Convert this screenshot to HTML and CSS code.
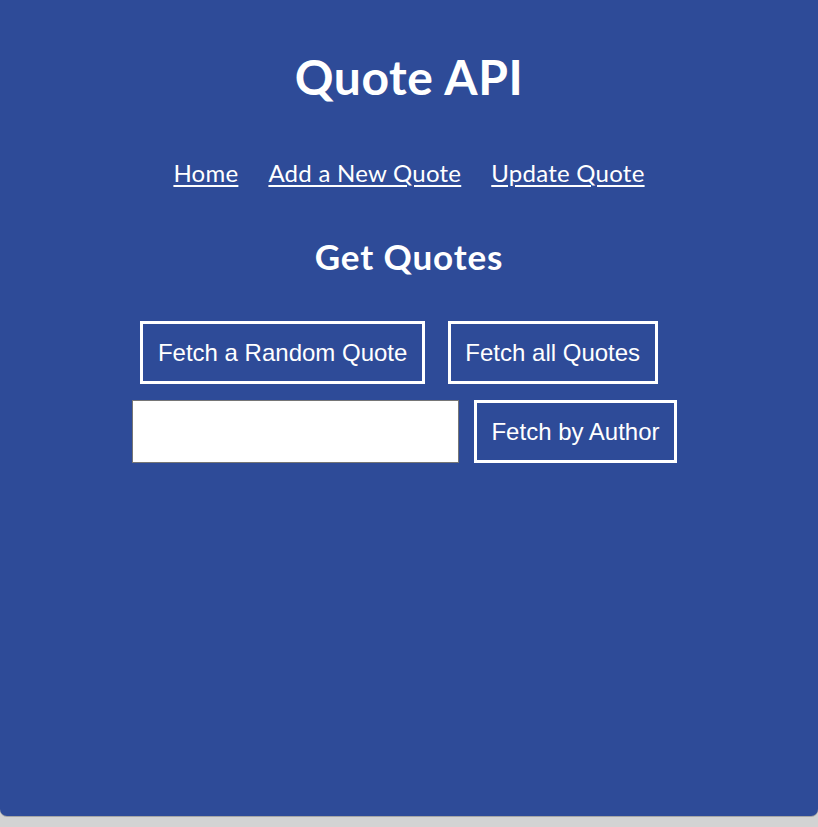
FILE: index.html
```html
<!DOCTYPE html>
<html lang="en">
<head>
<meta charset="utf-8">
<title>Quote API</title>
<link rel="stylesheet" href="styles.css">
</head>
<body>
<div class="page">
  <h1 class="title">Quote API</h1>
  <nav class="nav">
    <a href="#">Home</a>
    <a href="#">Add a New Quote</a>
    <a href="#">Update Quote</a>
  </nav>
  <h2 class="subtitle">Get Quotes</h2>
  <div class="row row-one">
    <button class="btn">Fetch a Random Quote</button>
    <button class="btn">Fetch all Quotes</button>
  </div>
  <div class="row row-two">
    <input class="author" type="text">
    <button class="btn">Fetch by Author</button>
  </div>
</div>
</body>
</html>
```
FILE: styles.css
```css
html, body {
  margin: 0;
  padding: 0;
}
body {
  background: #d3d3d3;
  height: 827px;
  overflow: hidden;
}
.page {
  height: 816px;
  box-sizing: border-box;
  background: #2e4b98;
  border-radius: 0 0 7px 7px;
  box-shadow: 0 1px 0 #a6a6a6;
  color: #fff;
  font-family: "Lato", "Noto Sans", sans-serif;
  padding-top: 48px;
  display: flex;
  flex-direction: column;
  align-items: center;
}
.title {
  margin: 0;
  font-size: 48px;
  line-height: 58px;
  font-weight: 700;
  letter-spacing: 0.6px;
}
.nav {
  margin-top: 52px;
  display: flex;
  gap: 30px;
  font-size: 24px;
  line-height: 30px;
  letter-spacing: 0.25px;
}
.nav a {
  color: #fff;
  text-decoration: underline;
  text-underline-offset: 3px;
  text-decoration-thickness: 2px;
}
.subtitle {
  margin: 48px 0 0;
  font-size: 35px;
  line-height: 40px;
  font-weight: 700;
  letter-spacing: 0.9px;
}
.row {
  display: flex;
  justify-content: center;
}
.row-one {
  margin-top: 45px;
  gap: 23px;
  padding-right: 20px;
}
.row-two {
  margin-top: 16px;
  gap: 15px;
  padding-right: 9px;
}
.btn {
  font-family: "Liberation Sans", Arial, sans-serif;
  font-size: 24px;
  line-height: 27px;
  color: #fff;
  background: transparent;
  border: 3px solid #fff;
  padding: 15px 14.5px;
  height: 63px;
  box-sizing: border-box;
  cursor: pointer;
}
.author {
  width: 327px;
  height: 63px;
  box-sizing: border-box;
  border: 1px solid #767676;
  background: #fff;
  margin: 0;
  padding: 0 4px;
  font-size: 20px;
}
```
